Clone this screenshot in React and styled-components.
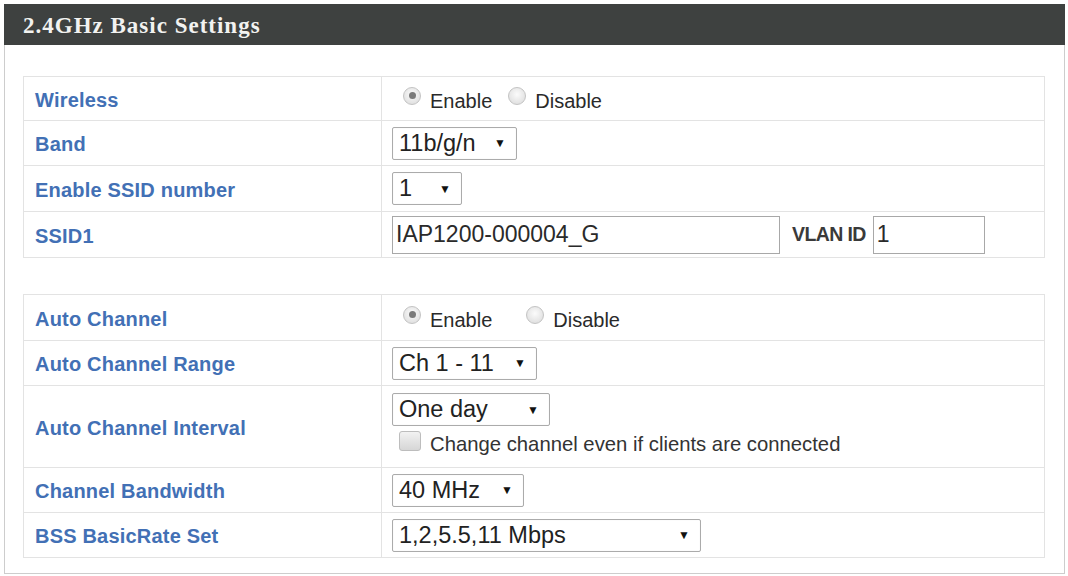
import React from 'react';
import styled, { createGlobalStyle } from 'styled-components';

const GlobalStyle = createGlobalStyle`
  body {
    margin: 0;
    background: #ffffff;
    font-family: "Liberation Sans", Arial, sans-serif;
  }
`;

const Page = styled.div`
  width: 1061px;
  padding: 4px 3px 2px 4px;
`;

const PanelHeader = styled.div`
  height: 41px;
  background: #3e4140;
  color: #f2f2f0;
  font-family: "Liberation Serif", "Times New Roman", serif;
  font-weight: bold;
  font-size: 23px;
  letter-spacing: 1px;
  display: flex;
  align-items: center;
  padding-left: 19px;
  padding-top: 2px;
  box-sizing: border-box;
`;

const PanelBody = styled.div`
  border: 1px solid #cdcdcd;
  border-top: none;
  padding: 31px 19px 15px 18px;
  display: flex;
  flex-direction: column;
  gap: 36px;
`;

const SettingsTable = styled.table`
  width: 100%;
  border-collapse: collapse;
  border: 1px solid #e3e3e3;
`;

const Row = styled.tr`
  height: ${({ h }) => h}px;
`;

const LabelCell = styled.td`
  width: 346px;
  padding: 3px 0 0 11px;
  border: 1px solid #e3e3e3;
  color: #4270b5;
  font-weight: bold;
  font-size: 20px;
  letter-spacing: 0.2px;
  vertical-align: middle;
`;

const ValueCell = styled.td`
  padding: 0 0 0 10px;
  border: 1px solid #e3e3e3;
  vertical-align: middle;
  color: #2a2a2a;
`;

const Stack = styled.div`
  display: flex;
  flex-direction: column;
  align-items: flex-start;
  gap: 7px;
  padding: 6px 0 10px;
`;

const RadioGroup = styled.div`
  display: flex;
  align-items: center;
  font-size: 20px;
  padding: 6px 0 0 11px;
`;

const RadioOption = styled.label`
  display: inline-flex;
  align-items: center;
  margin-right: ${({ gap }) => gap}px;
`;

const Radio = styled.span`
  width: 18px;
  height: 18px;
  border-radius: 50%;
  border: 1px solid #c4c4c4;
  background: radial-gradient(circle at 50% 40%, #fbfbfb 0%, #e3e3e3 70%, #d2d2d2 100%);
  box-sizing: border-box;
  margin-right: 9px;
  transform: translateY(-6px);
  display: flex;
  align-items: center;
  justify-content: center;
  &::after {
    content: '';
    width: 7px;
    height: 7px;
    border-radius: 50%;
    background: ${({ checked }) => (checked ? '#7a7a7a' : 'transparent')};
  }
`;

const SelectBox = styled.div`
  display: inline-flex;
  align-items: center;
  justify-content: space-between;
  width: ${({ w }) => w}px;
  height: 33px;
  box-sizing: border-box;
  border: 1px solid #ababab;
  border-radius: 2px;
  padding: 0 10px 0 6px;
  font-size: 23.5px;
  color: #222;
  background: #fff;
  box-shadow: inset 0 0 1px #e0e0e0;
`;

const Arrow = styled.span`
  font-size: 12px;
  color: #111;
`;

const InputLine = styled.div`
  display: flex;
  align-items: center;
`;

const TextBox = styled.div`
  width: ${({ w }) => w}px;
  height: 38px;
  box-sizing: border-box;
  border: 1px solid #a8a8a8;
  font-size: 23px;
  color: #2a2a2a;
  padding-left: 3px;
  display: flex;
  align-items: center;
`;

const VlanLabel = styled.span`
  font-size: 19.5px;
  font-weight: bold;
  letter-spacing: -0.6px;
  color: #3a3a3a;
  margin: 0 7px 0 12px;
`;

const CheckLine = styled.div`
  display: flex;
  align-items: center;
  font-size: 20.3px;
  color: #333;
  padding-left: 7px;
`;

const Checkbox = styled.span`
  width: 22px;
  height: 20px;
  border-radius: 3px;
  border: 1px solid #bdbdbd;
  box-sizing: border-box;
  background: linear-gradient(#f2f2f2, #d6d6d6);
  margin-right: 9px;
  transform: translateY(-4px);
`;

function Select({ w, value }) {
  return (
    <SelectBox w={w}>
      <span>{value}</span>
      <Arrow>▼</Arrow>
    </SelectBox>
  );
}

function Radios({ selected, gap }) {
  return (
    <RadioGroup>
      <RadioOption gap={gap}>
        <Radio checked={selected === 'enable'} />
        Enable
      </RadioOption>
      <RadioOption gap={0}>
        <Radio checked={selected === 'disable'} />
        Disable
      </RadioOption>
    </RadioGroup>
  );
}

export default function App() {
  return (
    <Page>
      <GlobalStyle />
      <PanelHeader>2.4GHz Basic Settings</PanelHeader>
      <PanelBody>
        <SettingsTable>
          <tbody>
            <Row h={44}>
              <LabelCell>Wireless</LabelCell>
              <ValueCell>
                <Radios selected="enable" gap={16} />
              </ValueCell>
            </Row>
            <Row h={45}>
              <LabelCell>Band</LabelCell>
              <ValueCell>
                <Select w={125} value="11b/g/n" />
              </ValueCell>
            </Row>
            <Row h={46}>
              <LabelCell>Enable SSID number</LabelCell>
              <ValueCell>
                <Select w={70} value="1" />
              </ValueCell>
            </Row>
            <Row h={46}>
              <LabelCell>SSID1</LabelCell>
              <ValueCell>
                <InputLine>
                  <TextBox w={388}>IAP1200-000004_G</TextBox>
                  <VlanLabel>VLAN ID</VlanLabel>
                  <TextBox w={112}>1</TextBox>
                </InputLine>
              </ValueCell>
            </Row>
          </tbody>
        </SettingsTable>

        <SettingsTable>
          <tbody>
            <Row h={46}>
              <LabelCell>Auto Channel</LabelCell>
              <ValueCell>
                <Radios selected="enable" gap={34} />
              </ValueCell>
            </Row>
            <Row h={45}>
              <LabelCell>Auto Channel Range</LabelCell>
              <ValueCell>
                <Select w={145} value="Ch 1 - 11" />
              </ValueCell>
            </Row>
            <Row h={82}>
              <LabelCell>Auto Channel Interval</LabelCell>
              <ValueCell>
                <Stack>
                  <Select w={158} value="One day" />
                  <CheckLine>
                    <Checkbox />
                    Change channel even if clients are connected
                  </CheckLine>
                </Stack>
              </ValueCell>
            </Row>
            <Row h={45}>
              <LabelCell>Channel Bandwidth</LabelCell>
              <ValueCell>
                <Select w={132} value="40 MHz" />
              </ValueCell>
            </Row>
            <Row h={45}>
              <LabelCell>BSS BasicRate Set</LabelCell>
              <ValueCell>
                <Select w={309} value="1,2,5.5,11 Mbps" />
              </ValueCell>
            </Row>
          </tbody>
        </SettingsTable>
      </PanelBody>
    </Page>
  );
}
